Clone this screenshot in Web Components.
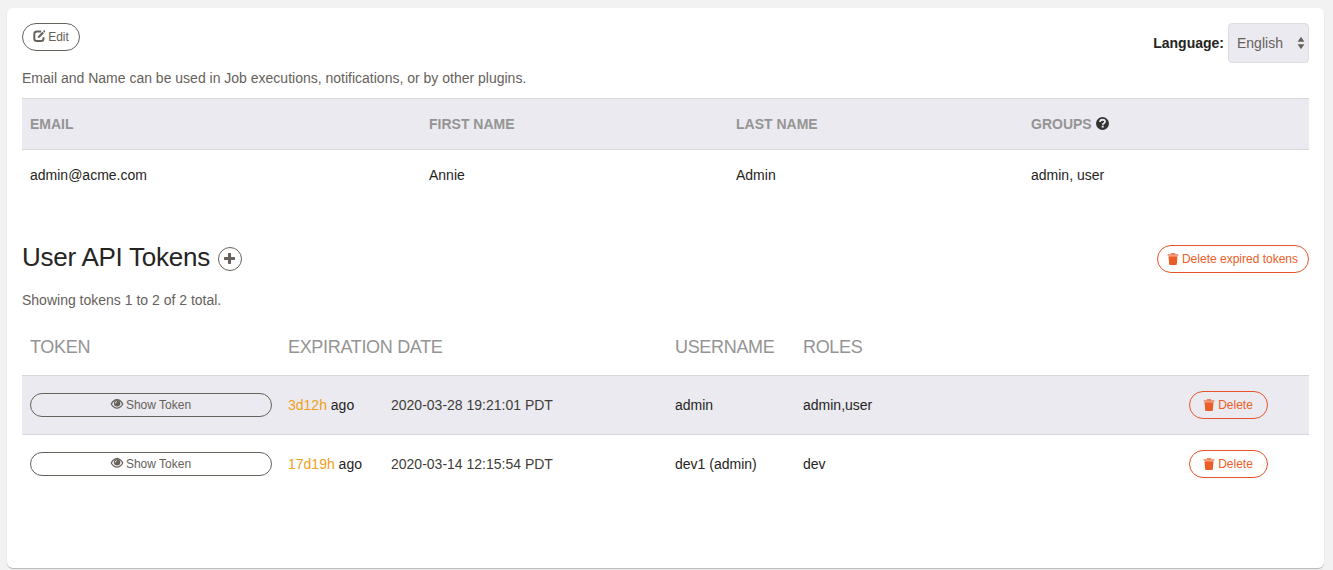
<!DOCTYPE html>
<html lang="en">
<head>
<meta charset="utf-8">
<title>User Profile</title>
<style>
html,body{margin:0;height:100%;overflow:hidden;background:#f2f2f2}
body{font:14px/20px "Liberation Sans",Arial,sans-serif;color:#252422}
</style>
</head>
<body>
<profile-page></profile-page>
<script>
const icons={
edit:'<path d="M8.2 1.4H3.8Q1.3 1.4 1.3 3.9V8.4Q1.3 10.9 3.8 10.9H8Q10.5 10.9 10.5 8.4V7.2" fill="none" stroke="currentColor" stroke-width="2"/><path d="M4.7 8.1 5.2 6.1 9.5 1.8 11 3.3 6.8 7.6Z"/><path d="M10 1.1 10.8.3Q11.2 0 11.6.4L12.1.9Q12.5 1.3 12.1 1.7L11.4 2.5Z"/>',
trash:'<path d="M.6 1.3H3.7V.8Q3.7 0 4.4 0H7.6Q8.3 0 8.3.8V1.3H11.4V2.8H.6Z" opacity=".75"/><path d="M1.5 3.3H10.5L9.8 11.3Q9.7 12 9 12H3Q2.3 12 2.2 11.3Z"/>',
eye:'<path d="M.3 6Q2.5 1.7 6 1.7T11.7 6Q9.5 10.1 6 10.1T.3 6Z" fill="none" stroke="currentColor" stroke-width="1.3"/><circle cx="6.1" cy="5.3" r="3.2"/><path d="M4.4 5.4Q4.4 3.8 5.8 3.5" fill="none" stroke="#fff" stroke-width=".9"/>',
plus:'<path d="M4.3.7Q4.3 0 5 0H7Q7.7 0 7.7.7V4.3H11.3Q12 4.3 12 5V7Q12 7.7 11.3 7.7H7.7V11.3Q7.7 12 7 12H5Q4.3 12 4.3 11.3V7.7H.7Q0 7.7 0 7V5Q0 4.3.7 4.3H4.3Z"/>',
help:'<circle cx="6" cy="6" r="6"/><path d="M3.8 4.5Q3.8 2.5 6.1 2.5T8.3 4.4Q8.3 5.2 7 6Q6.3 6.4 6.3 7.2" fill="none" stroke="#ebeaf0" stroke-width="1.7"/><path d="M5.3 8H7.1V9.8H5.3Z" fill="#ebeaf0"/>',
sort:'<path d="M6 -.3 9.4 4.8H2.6ZM2.6 7.2H9.4L6 12.3Z"/>'};
class GlyphIcon extends HTMLElement{
 connectedCallback(){
  this.attachShadow({mode:'open'}).innerHTML=`<style>:host{display:inline-block;flex:none;width:12px;height:12px}svg{display:block;width:100%;height:100%;fill:currentColor;overflow:visible}</style><svg viewBox="0 0 12 12">${icons[this.getAttribute('name')]}</svg>`;
 }}
customElements.define('glyph-icon',GlyphIcon);

class PillButton extends HTMLElement{
 connectedCallback(){
  this.attachShadow({mode:'open'}).innerHTML=`<style>
  :host{display:block;color:#66615b;font-size:12px}
  :host([danger]){color:#eb5e28;--edge:#e8542a;--shift:1px;--lift:1px}
  button{box-sizing:border-box;display:flex;align-items:center;justify-content:center;gap:3px;width:100%;height:var(--h,28px);margin:0;padding:0 var(--shift,0) 0 0;border:1px solid var(--edge,#66615b);border-radius:20px;background:transparent;color:inherit;font:inherit;line-height:18px;white-space:nowrap}
  glyph-icon{margin-bottom:var(--lift,2px)}
  </style><button><glyph-icon name="${this.getAttribute('icon')}"></glyph-icon><span><slot></slot></span></button>`;
 }}
customElements.define('pill-button',PillButton);

class LanguageSelect extends HTMLElement{
 connectedCallback(){
  this.attachShadow({mode:'open'}).innerHTML=`<style>
  :host{display:flex;align-items:center;gap:4px}
  div{box-sizing:border-box;width:81px;height:40px;border:1px solid #dddce0;border-radius:4px;background:#ebeaf0;color:#66615b;display:flex;align-items:center;justify-content:space-between;padding:0 1px 0 8px}
  </style><b>Language:</b><div><span><slot></slot></span><glyph-icon name="sort"></glyph-icon></div>`;
 }}
customElements.define('language-select',LanguageSelect);

class TableRow extends HTMLElement{
 connectedCallback(){
  this.attachShadow({mode:'open'}).innerHTML=`<style>
  :host{box-sizing:border-box;display:grid;grid-template-columns:var(--cols);align-items:center;height:var(--row,52px);padding:0 8px;white-space:nowrap}
  :host([shaded]){background:#ebeaf0;border-top:1px solid #d8d7db;border-bottom:1px solid #d8d7db}
  :host([head]){color:#949494}
  </style><slot></slot>`;
 }}
customElements.define('table-row',TableRow);

class TokenRow extends HTMLElement{
 connectedCallback(){
  const a=n=>this.getAttribute(n);
  this.attachShadow({mode:'open'}).innerHTML=`<style>
  :host{display:block}
  .show{width:242px;--h:24px}
  .age{color:#f0a020}
  .date{color:#403d39}
  .del{width:79px}
  </style><table-row ${this.hasAttribute('shaded')?'shaded':''}>
  <pill-button class="show" icon="eye">Show Token</pill-button>
  <span><span class="age">${a('age')}</span> ago</span>
  <span class="date">${a('date')}</span>
  <span>${a('user')}</span><span>${a('roles')}</span>
  <pill-button class="del" danger icon="trash">Delete</pill-button></table-row>`;
 }}
customElements.define('token-row',TokenRow);

class ProfilePage extends HTMLElement{
 connectedCallback(){
  this.attachShadow({mode:'open'}).innerHTML=`<style>
  :host{display:block;padding:8px 9px 0 7px}
  main{box-sizing:border-box;height:560px;padding:15px 15px 0;border-radius:6px;background:#fff;box-shadow:0 1px 1px rgba(0,0,0,.25)}
  .bar{display:flex;justify-content:space-between;align-items:flex-start}
  p{margin:5px 0 10px;color:#66615b}
  .people{--cols:399px 307px 295px 1fr;--row:52px}
  .people table-row:last-child{height:50px}
  .groups{display:flex;align-items:center;gap:4px;font-weight:bold}
  .groups glyph-icon{width:13px;height:13px;color:#333;margin-bottom:2px}
  .title{margin-top:45px;height:28px}
  h3{display:flex;align-items:center;gap:8px;margin:-2px 0 0;font-size:26px;line-height:28px;font-weight:400}
  h3>:first-child{letter-spacing:-.25px}
  .add{box-sizing:border-box;width:24px;height:24px;border:1px solid #66615b;border-radius:50%;display:grid;place-items:center;color:#66615b;margin-top:4px}
  .add glyph-icon{width:11px;height:11px;margin:0 1px 1px 0}
  .title pill-button{width:152px}
  .summary{margin:17px 0 0}
  .tokens{--cols:258px 103px 284px 128px 386px 1fr;--row:60px}
  .tokens .head{--row:65px;font-size:18px;letter-spacing:-.32px;padding-top:8px}
  .tokens .head>:nth-child(2){grid-column:2/4}
  .tokens token-row:last-child{--row:58px}
  </style><main>
  <div class="bar"><pill-button style="width:58px" icon="edit">Edit</pill-button><language-select>English</language-select></div>
  <p>Email and Name can be used in Job executions, notifications, or by other plugins.</p>
  <section class="people">
   <table-row head shaded><b>EMAIL</b><b>FIRST NAME</b><b>LAST NAME</b><span class="groups">GROUPS<glyph-icon name="help"></glyph-icon></span></table-row>
   <table-row><span>admin@acme.com</span><span>Annie</span><span>Admin</span><span>admin, user</span></table-row>
  </section>
  <div class="bar title"><h3><span>User API Tokens</span><span class="add"><glyph-icon name="plus"></glyph-icon></span></h3><pill-button danger icon="trash">Delete expired tokens</pill-button></div>
  <p class="summary">Showing tokens 1 to 2 of 2 total.</p>
  <section class="tokens">
   <table-row head class="head"><span>TOKEN</span><span>EXPIRATION DATE</span><span>USERNAME</span><span>ROLES</span></table-row>
   <token-row shaded age="3d12h" date="2020-03-28 19:21:01 PDT" user="admin" roles="admin,user"></token-row>
   <token-row age="17d19h" date="2020-03-14 12:15:54 PDT" user="dev1 (admin)" roles="dev"></token-row>
  </section></main>`;
 }}
customElements.define('profile-page',ProfilePage);
</script>
</body>
</html>
